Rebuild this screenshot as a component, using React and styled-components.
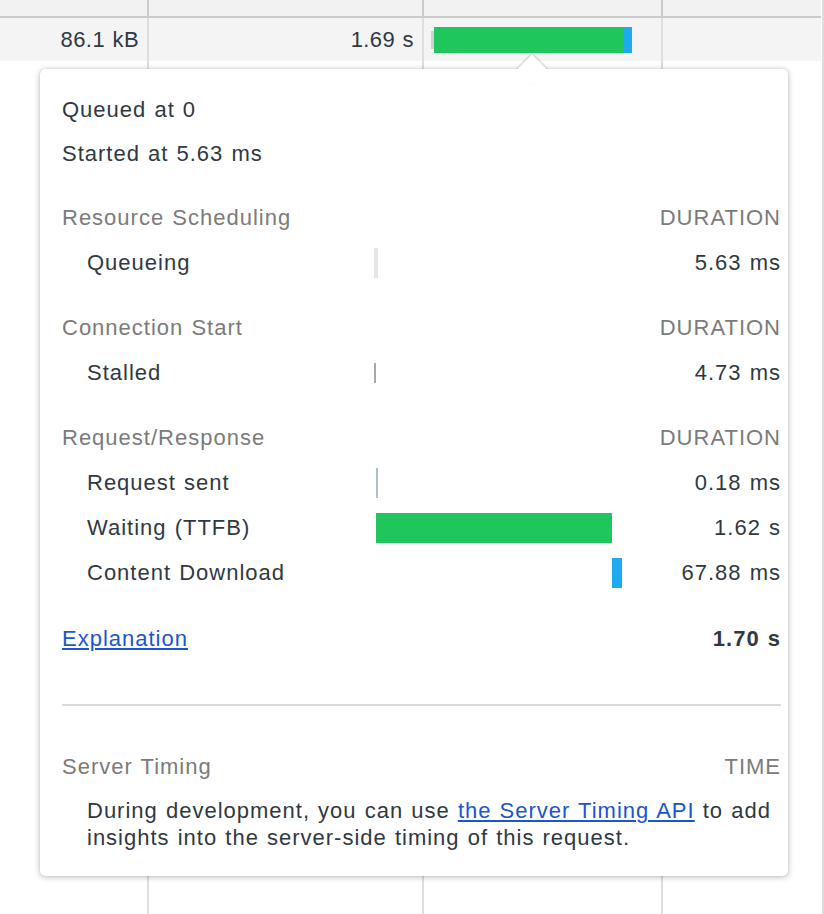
import React from "react";
import styled, { createGlobalStyle } from "styled-components";

const GlobalStyle = createGlobalStyle`
  html, body {
    margin: 0;
    padding: 0;
    background: #ffffff;
  }
  body {
    font-family: "Liberation Sans", Arial, sans-serif;
    color: #303942;
  }
`;

const Page = styled.div`
  position: relative;
  width: 824px;
  height: 914px;
  overflow: hidden;
  font-size: 22px;
  letter-spacing: 1px;
  word-spacing: 1px;
`;

const Table = styled.div`
  display: grid;
  grid-template-columns: 149px 275px 239px 158px;
  grid-template-rows: 18px 43px 1fr;
  height: 100%;
  width: 822px;
  border-right: 2px solid #dcdcdc;
`;

const HeadCell = styled.div`
  background: #f2f2f2;
  border-bottom: 2px solid #cbcbcb;
  border-right: ${(p) => (p.$last ? "none" : "2px solid #cbcbcb")};
`;

const Cell = styled.div`
  background: ${(p) => (p.$shaded ? "#f4f4f4" : "#ffffff")};
  border-right: ${(p) => (p.$last ? "none" : "2px solid #dedede")};
  display: flex;
  align-items: center;
  justify-content: flex-end;
  padding: 0 8px;
  color: #303942;
  letter-spacing: 0.4px;
`;

const WaterfallCell = styled(Cell)`
  justify-content: flex-start;
  padding: 0 0 0 7px;
`;

const Tick = styled.div`
  width: 3px;
  height: 18px;
  background: #d0d0d0;
`;

const Seg = styled.div`
  height: 26px;
  background: ${(p) => p.$color};
`;

const Popover = styled.div`
  position: absolute;
  left: 40px;
  top: 69px;
  width: 748px;
  height: 807px;
  box-sizing: border-box;
  background: #ffffff;
  border-radius: 5px;
  box-shadow: 0 1px 6px rgba(0, 0, 0, 0.28), 0 0 1px rgba(0, 0, 0, 0.2);
  padding: 19px 7px 0 22px;
`;

const Arrow = styled.div`
  position: absolute;
  left: 481px;
  top: -10px;
  width: 22px;
  height: 22px;
  background: #ffffff;
  transform: rotate(45deg);
  box-shadow: -1px -1px 2px rgba(0, 0, 0, 0.18);
`;

const Inner = styled.div`
  position: relative;
  display: flex;
  flex-direction: column;
`;

const Line = styled.div`
  height: 44px;
  display: flex;
  align-items: center;
`;

const Section = styled.div`
  margin-top: ${(p) => p.$gap}px;
  display: grid;
  grid-template-columns: 312px 248px 1fr;
  grid-auto-rows: 45px;
`;

const Label = styled.div`
  display: flex;
  align-items: center;
  white-space: nowrap;
  padding-left: ${(p) => (p.$indent ? 25 : 0)}px;
  color: ${(p) => (p.$muted ? "#7b7b7b" : "#303942")};
`;

const Value = styled.div`
  display: flex;
  align-items: center;
  justify-content: flex-end;
  white-space: nowrap;
  color: ${(p) => (p.$muted ? "#7b7b7b" : "#303942")};
  font-weight: ${(p) => (p.$bold ? 700 : 400)};
`;

const Track = styled.div`
  position: relative;
`;

const Bar = styled.div`
  position: absolute;
  top: 50%;
  transform: translateY(-50%);
  background: ${(p) => p.$color};
  height: ${(p) => p.$h}px;
`;

const Link = styled.a`
  color: #1a55d3;
  text-decoration: underline;
  text-underline-offset: 2px;
`;

const Divider = styled.div`
  height: 2px;
  background: #dadada;
  margin-top: 43px;
`;

const Paragraph = styled.p`
  margin: 8px 0 0 0;
  padding-left: 25px;
  line-height: 27px;
  color: #303942;
`;

const SCALE = 248 / 1700;

const sections = [
  {
    title: "Resource Scheduling",
    gap: 19,
    rows: [
      { label: "Queueing", value: "5.63 ms", start: 0, dur: 5.63, min: 4, color: "#e5e5e5", h: 30 },
    ],
  },
  {
    title: "Connection Start",
    gap: 20,
    rows: [
      { label: "Stalled", value: "4.73 ms", start: 0, dur: 4.73, min: 2, color: "#a8a8a8", h: 20 },
    ],
  },
  {
    title: "Request/Response",
    gap: 20,
    rows: [
      { label: "Request sent", value: "0.18 ms", start: 10.36, dur: 0.18, min: 2, color: "#b0bec5", h: 30 },
      { label: "Waiting (TTFB)", value: "1.62 s", start: 12.5, dur: 1620, min: 2, color: "#1fc65c", h: 30 },
      { label: "Content Download", value: "67.88 ms", start: 1632.5, dur: 67.88, min: 2, color: "#1eaaf1", h: 30 },
    ],
  },
];

function TimingBar({ row }) {
  const left = Math.round(row.start * SCALE);
  const width = Math.max(row.min, Math.round(row.dur * SCALE));
  return (
    <Track>
      <Bar $color={row.color} $h={row.h} style={{ left, width }} />
    </Track>
  );
}

export default function App() {
  return (
    <Page>
      <GlobalStyle />
      <Table>
        <HeadCell />
        <HeadCell />
        <HeadCell />
        <HeadCell $last />
        <Cell $shaded>86.1 kB</Cell>
        <Cell $shaded>1.69 s</Cell>
        <WaterfallCell $shaded>
          <Tick />
          <Seg $color="#1fc65c" style={{ width: 190 }} />
          <Seg $color="#1eaaf1" style={{ width: 8 }} />
        </WaterfallCell>
        <Cell $shaded $last />
        <Cell />
        <Cell />
        <Cell />
        <Cell $last />
      </Table>

      <Popover>
        <Arrow />
        <Inner>
          <Line>Queued at 0</Line>
          <Line>Started at 5.63 ms</Line>

          {sections.map((s) => (
            <Section key={s.title} $gap={s.gap}>
              <Label $muted>{s.title}</Label>
              <div />
              <Value $muted>DURATION</Value>
              {s.rows.map((r) => (
                <React.Fragment key={r.label}>
                  <Label $indent>{r.label}</Label>
                  <TimingBar row={r} />
                  <Value>{r.value}</Value>
                </React.Fragment>
              ))}
            </Section>
          ))}

          <Section $gap={21}>
            <Label>
              <Link href="#">Explanation</Link>
            </Label>
            <div />
            <Value $bold>1.70 s</Value>
          </Section>

          <Divider />

          <Section $gap={38}>
            <Label $muted>Server Timing</Label>
            <div />
            <Value $muted>TIME</Value>
          </Section>
          <Paragraph>
            During development, you can use <Link href="#">the Server Timing API</Link> to add
            insights into the server-side timing of this request.
          </Paragraph>
        </Inner>
      </Popover>
    </Page>
  );
}
